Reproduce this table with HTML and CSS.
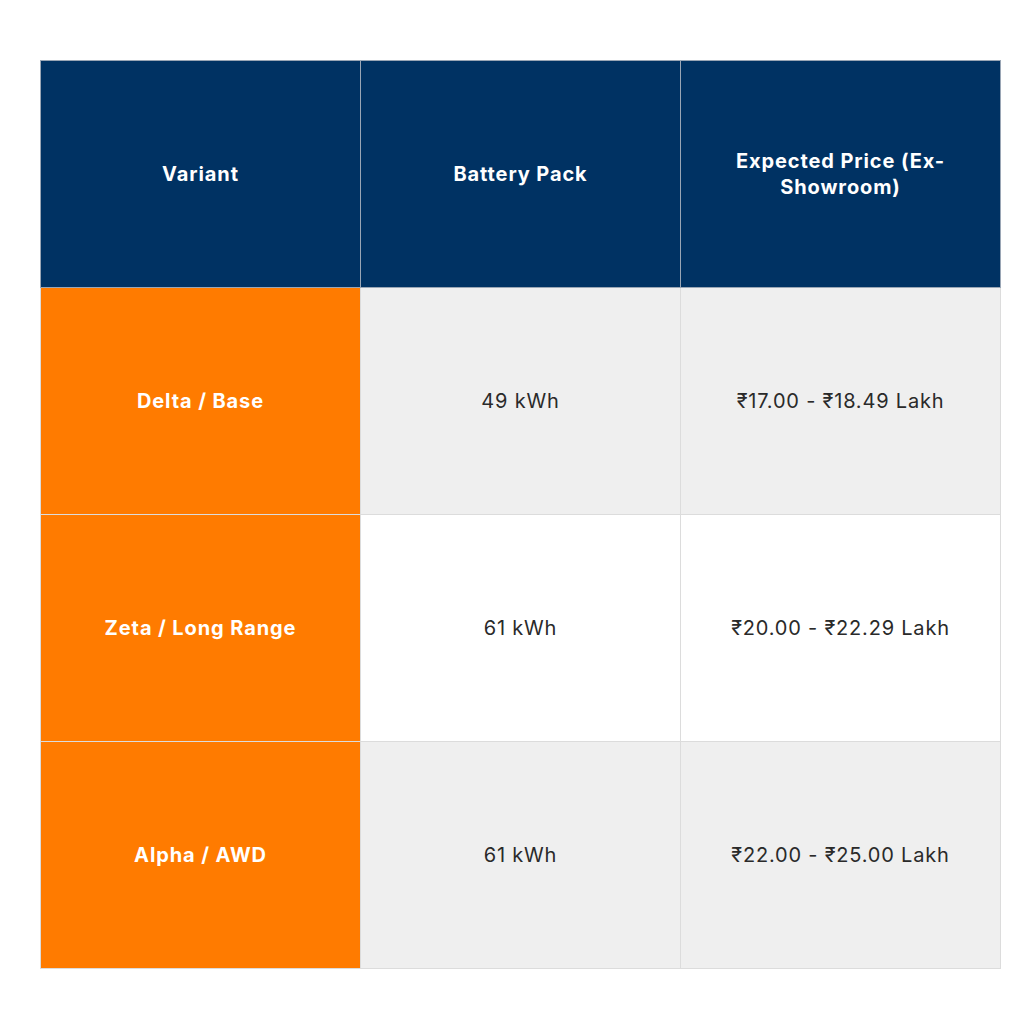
FILE: index.html
```html
<!DOCTYPE html>
<html lang="en">
<head>
<meta charset="utf-8">
<title>Variants</title>
<link rel="stylesheet" href="styles.css">
</head>
<body>
<div class="page">
<table class="variants">
<colgroup>
<col class="col">
<col class="col">
<col class="col">
</colgroup>
<thead>
<tr>
<th>Variant</th>
<th>Battery Pack</th>
<th>Expected Price (Ex-Showroom)</th>
</tr>
</thead>
<tbody>
<tr class="alt">
<th class="name">Delta / Base</th>
<td>49 kWh</td>
<td>₹17.00 - ₹18.49 Lakh</td>
</tr>
<tr>
<th class="name">Zeta / Long Range</th>
<td>61 kWh</td>
<td>₹20.00 - ₹22.29 Lakh</td>
</tr>
<tr class="alt">
<th class="name">Alpha / AWD</th>
<td>61 kWh</td>
<td>₹22.00 - ₹25.00 Lakh</td>
</tr>
</tbody>
</table>
</div>
</body>
</html>
```
FILE: styles.css
```css
html, body {
  margin: 0;
  padding: 0;
  background: #ffffff;
}
.page {
  padding: 60px 23px 56px 40px;
  font-family: "Inter", "Open Sans", sans-serif;
}
.variants {
  border-collapse: collapse;
  table-layout: fixed;
  width: 961px;
}
.col {
  width: 320px;
}
.variants th,
.variants td {
  box-sizing: border-box;
  height: 227px;
  border: 1px solid #dcdcdc;
  text-align: center;
  vertical-align: middle;
  padding: 0 30px;
  font-size: 20px;
  line-height: 26px;
  letter-spacing: 0.9px;
}
.variants thead th {
  background: #003263;
  color: #ffffff;
  font-weight: 700;
  border-color: #9aa6b5;
}
.variants .name {
  background: #ff7b00;
  color: #ffffff;
  font-weight: 700;
}
.variants td {
  color: #2a2a2a;
  font-weight: 400;
  background: #ffffff;
  letter-spacing: 0.8px;
}
.variants tr.alt td {
  background: #efefef;
}
```
